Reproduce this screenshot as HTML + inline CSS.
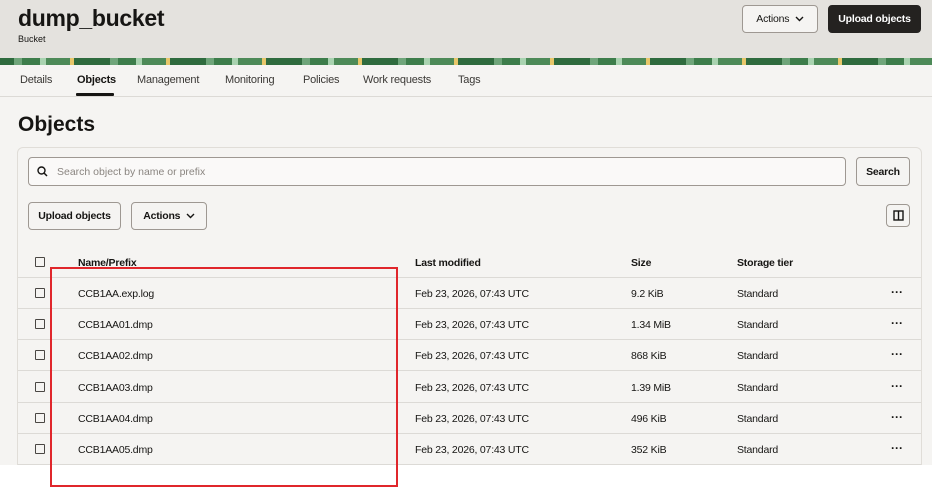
<!DOCTYPE html>
<html><head><style>
*{box-sizing:border-box;margin:0;padding:0}
body{width:932px;height:488px;overflow:hidden;background:#fff;font-family:"Liberation Sans",sans-serif;color:#161513;position:relative}
.hdr{position:absolute;left:0;top:0;width:932px;height:58px;background:#e4e2de}
.band{position:absolute;left:0;top:58px;width:932px;height:7px;background:repeating-linear-gradient(90deg,#2f6b3e 0 14px,#6fa57a 14px 22px,#3d7d4b 22px 40px,#a9d3b0 40px 46px,#4d8a58 46px 70px,#e8c76a 70px 74px,#2f6b3e 74px 96px)}
h1{position:absolute;left:18px;top:5px;font-size:23px;font-weight:bold;letter-spacing:-0.3px}
.sub{position:absolute;left:18px;top:34px;font-size:9px}
.btn{position:absolute;border:1px solid #9e9892;border-radius:4px;background:#f5f4f2;font-size:10.5px;font-weight:bold;display:flex;align-items:center;justify-content:center;letter-spacing:-0.2px}
.dark{background:#242220;color:#fff;border-color:#242220}
.tabs{position:absolute;left:0;top:65px;width:932px;height:32px;background:#f5f4f2;border-bottom:1px solid #dcdad6}
.tabs span{position:absolute;top:9px;font-size:11px;color:#3a3835;letter-spacing:-0.2px}
.main{position:absolute;left:0;top:97px;width:932px;height:368px;background:#f5f4f2}
h2{position:absolute;left:18px;top:113px;font-size:21px;font-weight:bold}
.panel{position:absolute;left:17px;top:147px;width:905px;height:330px;border:1px solid #e0ddd8;border-radius:6px;background:#f5f4f2}
.search{position:absolute;left:28px;top:157px;width:818px;height:29px;border:1px solid #9e9892;border-radius:4px;background:#faf9f8;font-size:10.5px;color:#8a8580;padding:8px 0 0 28px}
.row{position:absolute;left:18px;width:903px;height:31px;border-bottom:1px solid #dcdad6;font-size:10.5px;letter-spacing:-0.2px}
.row span{position:absolute;top:10px}
.cb{position:absolute;left:17px;top:10px;width:10px;height:10px;border:1px solid #4a4744;border-radius:1px}
.hd span{font-weight:bold}
.row span.d{left:873px;top:7px;font-weight:bold;font-size:12px;letter-spacing:0}
.white{position:absolute;left:0;top:465px;width:932px;height:23px;background:#fff}
.red{position:absolute;left:50px;top:267px;width:348px;height:220px;border:2px solid #e0262b}
</style></head><body>
<div class="hdr"></div>
<div class="band"></div>
<h1>dump_bucket</h1>
<div class="sub">Bucket</div>
<div class="btn" style="left:742px;top:5px;width:76px;height:28px;font-weight:normal">Actions&nbsp;&nbsp;<svg width="9" height="6" viewBox="0 0 9 6"><path d="M1 1l3.5 3.5L8 1" stroke="#161513" stroke-width="1.4" fill="none"/></svg></div>
<div class="btn dark" style="left:828px;top:5px;width:93px;height:28px">Upload objects</div>
<div class="tabs">
<span style="left:20px">Details</span>
<span style="left:77px;color:#161513;font-weight:bold">Objects</span>
<div style="position:absolute;left:76px;top:28px;width:38px;height:3px;background:#161513;border-radius:1px"></div>
<span style="left:137px">Management</span>
<span style="left:225px">Monitoring</span>
<span style="left:303px">Policies</span>
<span style="left:363px">Work requests</span>
<span style="left:458px">Tags</span>
</div>
<div class="main"></div>
<h2>Objects</h2>
<div class="panel"></div>
<div class="search">Search object by name or prefix</div>
<svg style="position:absolute;left:37px;top:166px" width="11" height="11" viewBox="0 0 11 11"><circle cx="4.5" cy="4.5" r="3.5" stroke="#161513" stroke-width="1.4" fill="none"/><path d="M7 7l3 3" stroke="#161513" stroke-width="1.5"/></svg>
<div class="btn" style="left:856px;top:157px;width:54px;height:29px">Search</div>
<div class="btn" style="left:28px;top:202px;width:93px;height:28px">Upload objects</div>
<div class="btn" style="left:131px;top:202px;width:76px;height:28px">Actions&nbsp;&nbsp;<svg width="9" height="6" viewBox="0 0 9 6"><path d="M1 1l3.5 3.5L8 1" stroke="#161513" stroke-width="1.4" fill="none"/></svg></div>
<div class="btn" style="left:886px;top:204px;width:24px;height:23px"><svg width="11" height="11" viewBox="0 0 11 11"><rect x="1" y="1" width="9" height="9" stroke="#161513" stroke-width="1.4" fill="none"/><path d="M5.5 1v9" stroke="#161513" stroke-width="1.4"/></svg></div>

<div class="row hd" style="top:247px"><div class="cb" style="top:10px"></div><span style="left:60px">Name/Prefix</span><span style="left:397px">Last modified</span><span style="left:613px">Size</span><span style="left:719px">Storage tier</span></div>
<div class="row" style="top:278px"><div class="cb"></div><span style="left:60px">CCB1AA.exp.log</span><span style="left:397px">Feb 23, 2026, 07:43 UTC</span><span style="left:613px">9.2 KiB</span><span style="left:719px">Standard</span><span class="d">···</span></div>
<div class="row" style="top:309px"><div class="cb"></div><span style="left:60px">CCB1AA01.dmp</span><span style="left:397px">Feb 23, 2026, 07:43 UTC</span><span style="left:613px">1.34 MiB</span><span style="left:719px">Standard</span><span class="d">···</span></div>
<div class="row" style="top:340px"><div class="cb"></div><span style="left:60px">CCB1AA02.dmp</span><span style="left:397px">Feb 23, 2026, 07:43 UTC</span><span style="left:613px">868 KiB</span><span style="left:719px">Standard</span><span class="d">···</span></div>
<div class="row" style="top:372px"><div class="cb"></div><span style="left:60px">CCB1AA03.dmp</span><span style="left:397px">Feb 23, 2026, 07:43 UTC</span><span style="left:613px">1.39 MiB</span><span style="left:719px">Standard</span><span class="d">···</span></div>
<div class="row" style="top:403px"><div class="cb"></div><span style="left:60px">CCB1AA04.dmp</span><span style="left:397px">Feb 23, 2026, 07:43 UTC</span><span style="left:613px">496 KiB</span><span style="left:719px">Standard</span><span class="d">···</span></div>
<div class="row" style="top:434px"><div class="cb"></div><span style="left:60px">CCB1AA05.dmp</span><span style="left:397px">Feb 23, 2026, 07:43 UTC</span><span style="left:613px">352 KiB</span><span style="left:719px">Standard</span><span class="d">···</span></div>
<div class="white"></div>
<div class="red"></div>
</body></html>
